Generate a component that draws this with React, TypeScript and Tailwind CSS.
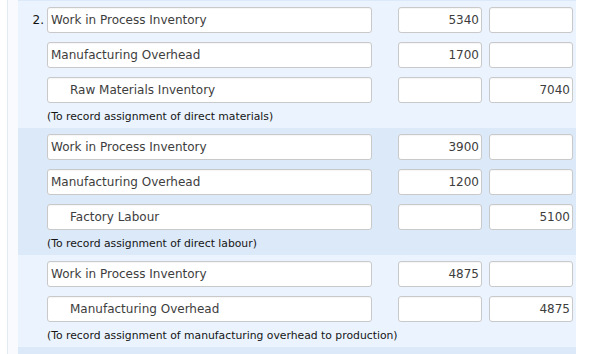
import React from "react";

type Row = { account: string; debit?: string; credit?: string; indent?: boolean };
type Entry = { rows: Row[]; note: string };

const entries: Entry[] = [
  {
    rows: [
      { account: "Work in Process Inventory", debit: "5340" },
      { account: "Manufacturing Overhead", debit: "1700" },
      { account: "Raw Materials Inventory", credit: "7040", indent: true },
    ],
    note: "(To record assignment of direct materials)",
  },
  {
    rows: [
      { account: "Work in Process Inventory", debit: "3900" },
      { account: "Manufacturing Overhead", debit: "1200" },
      { account: "Factory Labour", credit: "5100", indent: true },
    ],
    note: "(To record assignment of direct labour)",
  },
  {
    rows: [
      { account: "Work in Process Inventory", debit: "4875" },
      { account: "Manufacturing Overhead", credit: "4875", indent: true },
    ],
    note: "(To record assignment of manufacturing overhead to production)",
  },
];

const box = "h-[26px] bg-white border border-[#c9c9c9] rounded-[3px] flex items-center text-[12px] text-[#3d3d3d] shadow-[inset_0_1px_1px_rgba(0,0,0,0.04)]";

const EntryBlock = ({ entry, index, shade }: { entry: Entry; index: number; shade: boolean }) => (
  <div className={`flex flex-col pt-[6px] ${shade ? "bg-[#dce9f8]" : "bg-[#ebf4fe]"}`}>
    <div className="flex flex-col gap-[9px]">
      {entry.rows.map((row, i) => (
        <div key={i} className="flex items-center">
          <div className="w-[29px] pr-[3px] text-right text-[12px] text-[#111]">
            {index === 0 && i === 0 ? "2." : ""}
          </div>
          <div className={`${box} w-[325px] ${row.indent ? "pl-[22px]" : "pl-[3px]"}`}>{row.account}</div>
          <div className={`${box} w-[84px] ml-[26px] justify-end pr-[2px]`}>{row.debit}</div>
          <div className={`${box} w-[84px] ml-[7px] justify-end pr-[2px]`}>{row.credit}</div>
        </div>
      ))}
    </div>
    <div className="h-[25px] pt-[7px] leading-[14px] pl-[29px] text-[10.8px] text-[#151515]">{entry.note}</div>
  </div>
);

export default function App() {
  return (
    <div
      className="w-[594px] h-[354px] bg-white flex overflow-hidden"
      style={{ fontFamily: "Verdana, 'DejaVu Sans', sans-serif" }}
    >
      <div className="w-[7px] bg-white" />
      <div className="w-px bg-[#e4eaf1]" />
      <div className="w-[10px] bg-[#f8fafd]" />
      <div className="w-[558px] flex flex-col">
        <div className="h-px bg-[#dce9f8]" />
        {entries.map((e, i) => (
          <EntryBlock key={i} entry={e} index={i} shade={i % 2 === 1} />
        ))}
        <div className="flex-1 bg-[#dce9f8]" />
      </div>
      <div className="flex-1 bg-white" />
    </div>
  );
}
